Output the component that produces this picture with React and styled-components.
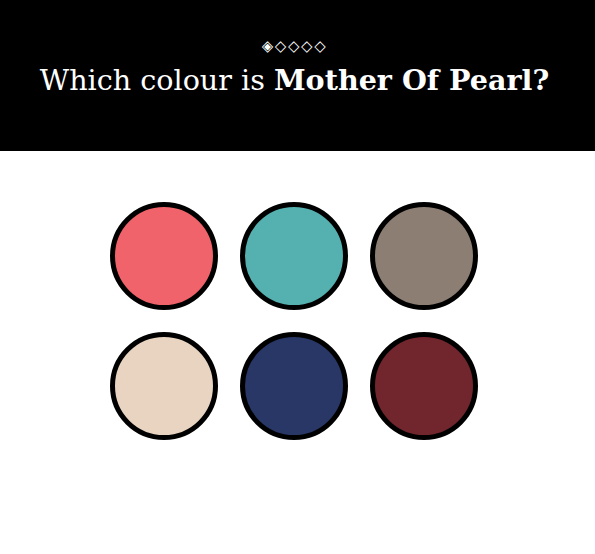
import React from "react";
import styled, { createGlobalStyle } from "styled-components";

const Global = createGlobalStyle`
  html, body { margin: 0; padding: 0; background: #fff; }
  body { font-family: "DejaVu Serif", "Liberation Serif", serif; }
`;

const Header = styled.header`
  background: #000;
  color: #fff;
  height: 151px;
  box-sizing: border-box;
  padding-top: 37px;
  padding-right: 6px;
  display: flex;
  flex-direction: column;
  align-items: center;
`;

const Progress = styled.div`
  font-family: "DejaVu Sans", sans-serif;
  font-size: 15px;
  line-height: 18px;
  letter-spacing: 1.6px;
  color: #fff;
`;

const Title = styled.h1`
  margin: 7px 0 0;
  font-size: 28.6px;
  font-weight: 400;
  line-height: 36px;
  white-space: nowrap;
`;

const Strong = styled.span`
  font-weight: 700;
`;

const Grid = styled.main`
  display: grid;
  grid-template-columns: repeat(3, 108px);
  gap: 22px;
  justify-content: center;
  padding-top: 51px;
  padding-right: 7px;
`;

const Swatch = styled.button`
  width: 108px;
  height: 108px;
  border-radius: 50%;
  border: 5px solid #000;
  box-sizing: border-box;
  background: ${(p) => p.$color};
  padding: 0;
  cursor: pointer;
`;

const colours = ["#f0636a", "#55b1b0", "#8c7e72", "#e8d4c1", "#283766", "#71252d"];

export default function App() {
  return (
    <>
      <Global />
      <Header>
        <Progress>◈◇◇◇◇</Progress>
        <Title>
          Which colour is <Strong>Mother Of Pearl?</Strong>
        </Title>
      </Header>
      <Grid>
        {colours.map((c) => (
          <Swatch key={c} $color={c} aria-label={c} />
        ))}
      </Grid>
    </>
  );
}
